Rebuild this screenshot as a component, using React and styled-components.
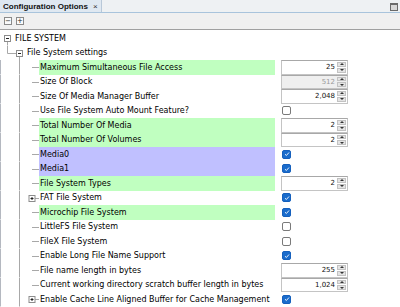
import React from 'react'
import styled, { createGlobalStyle } from 'styled-components'

const GlobalStyle = createGlobalStyle`
  html, body { margin: 0; padding: 0; background: #fff; }
  body { font-family: "DejaVu Sans", Verdana, sans-serif; }
`

const Panel = styled.div`
  width: 400px;
  height: 307px;
  overflow: hidden;
  background: #fff;
  display: flex;
  flex-direction: column;
`

const TabStrip = styled.div`
  height: 12px;
  flex: none;
  display: flex;
  align-items: stretch;
  justify-content: space-between;
  background: #eef1f3;
  border-bottom: 1px solid #a9c4dc;
`

const Tab = styled.div`
  display: flex;
  align-items: center;
  gap: 5px;
  padding: 0 3px 0 3px;
  background: #dfe8f1;
  border-right: 1px solid #b8c8d8;
  font-family: "Liberation Sans", Arial, sans-serif;
  font-weight: bold;
  font-size: 8px;
  color: #111;

  span { font-size: 8px; font-weight: normal; color: #333; }
`

const WinButton = styled.div`
  width: 6px;
  height: 5px;
  margin: 3px 2px 0 0;
  border: 1px solid #6a6a6a;
  border-top-width: 2px;
  background: #d8d8d8;
`

const Toolbar = styled.div`
  height: 16px;
  flex: none;
  display: flex;
  align-items: center;
  gap: 4px;
  padding-left: 4px;
  background: #f0f0f0;
  border-bottom: 1px solid #a0a0a0;
`

const ToolButton = styled.div`
  width: 6px;
  height: 6px;
  border: 1px solid #8a8a8a;
  background: #fafafa;
  display: flex;
  align-items: center;
  justify-content: center;
  font-size: 7px;
  line-height: 1;
  color: #222;
`

const Tree = styled.div`
  padding-top: 1px;
  display: flex;
  flex-direction: column;
`

const Row = styled.div`
  height: 14.5px;
  display: flex;
  align-items: stretch;
  flex: none;
`

const Gutter = styled.svg`
  width: ${p => p.$w}px;
  height: 14.5px;
  flex: none;
  display: block;
`

const Label = styled.div`
  width: ${p => p.$w}px;
  flex: none;
  display: flex;
  align-items: center;
  padding-left: 1px;
  box-sizing: border-box;
  font-size: 8px;
  color: #000;
  white-space: nowrap;
  background: ${p => (p.$hl === 'green' ? '#c0ffc0' : p.$hl === 'blue' ? '#c0c0ff' : 'transparent')};
`

const ValueCell = styled.div`
  margin-left: 6px;
  width: 67px;
  display: flex;
  align-items: center;
`

const Spinner = styled.div`
  width: 67px;
  height: 14.5px;
  box-sizing: border-box;
  display: flex;
  border: 1px solid #c4c4c4;
  border-top-color: #a8a8a8;
  background: ${p => (p.$disabled ? '#efefef' : '#fff')};
`

const SpinValue = styled.div`
  flex: 1;
  text-align: right;
  padding-right: 2px;
  font-size: 7px;
  line-height: 12px;
  color: ${p => (p.$disabled ? '#9a9a9a' : '#111')};
`

const SpinArrows = styled.div`
  width: 9px;
  display: flex;
  flex-direction: column;
  gap: 1px;
  padding: 1px 1px 1px 0;
`

const Arrow = styled.div`
  flex: 1;
  background: #e4e4e4;
  border: 1px solid #c2c2c2;
  display: flex;
  align-items: center;
  justify-content: center;

  &::after {
    content: '';
    border-left: 2px solid transparent;
    border-right: 2px solid transparent;
    ${p => (p.$down ? 'border-top: 2px solid #333;' : 'border-bottom: 2px solid #333;')}
  }
`

const Check = styled.div`
  width: 9px;
  height: 9px;
  margin-left: 1px;
  border-radius: 2px;
  box-sizing: border-box;
  border: 1px solid ${p => (p.$on ? '#1560bd' : '#7a7a7a')};
  background: ${p => (p.$on ? '#1a6ccc' : '#fff')};
  display: flex;
  align-items: center;
  justify-content: center;
`

const LINE = '#a8a8a8'

const Expander = ({ cx, cy, open }) => (
  <g>
    <rect x={cx - 3} y={cy - 3} width={6} height={6} fill="#fff" stroke="#8c8c8c" strokeWidth={1} />
    <line x1={cx - 1.5} y1={cy} x2={cx + 1.5} y2={cy} stroke="#222" strokeWidth={1} />
    {!open && <line x1={cx} y1={cy - 1.5} x2={cx} y2={cy + 1.5} stroke="#222" strokeWidth={1} />}
  </g>
)

const rows = [
  { kind: 'root', label: 'FILE SYSTEM' },
  { kind: 'group', label: 'File System settings' },
  { label: 'Maximum Simultaneous File Access', hl: 'green', spin: '25' },
  { label: 'Size Of Block', spin: '512', disabled: true },
  { label: 'Size Of Media Manager Buffer', spin: '2,048' },
  { label: 'Use File System Auto Mount Feature?', check: false },
  { label: 'Total Number Of Media', hl: 'green', spin: '2' },
  { label: 'Total Number Of Volumes', hl: 'green', spin: '2' },
  { label: 'Media0', hl: 'blue', check: true },
  { label: 'Media1', hl: 'blue', check: true },
  { label: 'File System Types', hl: 'green', spin: '2' },
  { label: 'FAT File System', closed: true, check: true },
  { label: 'Microchip File System', hl: 'green', check: true },
  { label: 'LittleFS File System', check: false },
  { label: 'FileX File System', check: false },
  { label: 'Enable Long File Name Support', check: true },
  { label: 'File name length in bytes', spin: '255' },
  { label: 'Current working directory scratch buffer length in bytes', spin: '1,024' },
  { label: 'Enable Cache Line Aligned Buffer for Cache Management', closed: true, check: true },
]

const TreeLines = ({ kind, closed }) => {
  const mid = 7.5
  if (kind === 'root') {
    return (
      <Gutter $w={14} viewBox="0 0 14 14.5">
        <line x1={7.5} y1={mid + 3} x2={7.5} y2={14.5} stroke={LINE} />
        <Expander cx={7.5} cy={mid} open />
      </Gutter>
    )
  }
  if (kind === 'group') {
    return (
      <Gutter $w={26} viewBox="0 0 26 14.5">
        <line x1={7.5} y1={0} x2={7.5} y2={mid} stroke={LINE} />
        <line x1={7.5} y1={mid} x2={16} y2={mid} stroke={LINE} />
        <line x1={19.5} y1={mid + 3} x2={19.5} y2={14.5} stroke={LINE} />
        <Expander cx={19.5} cy={mid} open />
      </Gutter>
    )
  }
  return (
    <Gutter $w={39} viewBox="0 0 39 14.5">
      <line x1={0.5} y1={0} x2={0.5} y2={14.5} stroke="#b4b8c0" />
      <line x1={19.5} y1={0} x2={19.5} y2={14.5} stroke={LINE} />
      <line x1={closed ? 35 : 32} y1={mid} x2={39} y2={mid} stroke={LINE} />
      {closed && <Expander cx={32} cy={mid} />}
    </Gutter>
  )
}

const Value = ({ row }) => {
  if (row.spin !== undefined) {
    return (
      <Spinner $disabled={row.disabled}>
        <SpinValue $disabled={row.disabled}>{row.spin}</SpinValue>
        <SpinArrows>
          <Arrow />
          <Arrow $down />
        </SpinArrows>
      </Spinner>
    )
  }
  if (row.check !== undefined) {
    return (
      <Check $on={row.check}>
        {row.check && (
          <svg width="6" height="6" viewBox="0 0 6 6">
            <path d="M1 3.2 L2.4 4.5 L5 1.5" fill="none" stroke="#fff" strokeWidth="0.9" />
          </svg>
        )}
      </Check>
    )
  }
  return null
}

export default function App() {
  return (
    <>
      <GlobalStyle />
      <Panel>
        <TabStrip>
          <Tab>
            Configuration Options <span>×</span>
          </Tab>
          <WinButton />
        </TabStrip>
        <Toolbar>
          <ToolButton>−</ToolButton>
          <ToolButton>+</ToolButton>
        </Toolbar>
        <Tree>
          {rows.map((row, i) => {
            const kind = row.kind
            const gw = kind === 'root' ? 14 : kind === 'group' ? 26 : 39
            return (
              <Row key={i}>
                <TreeLines kind={kind} closed={row.closed} />
                <Label $w={275 - gw} $hl={row.hl}>{row.label}</Label>
                <ValueCell>
                  <Value row={row} />
                </ValueCell>
              </Row>
            )
          })}
        </Tree>
      </Panel>
    </>
  )
}
